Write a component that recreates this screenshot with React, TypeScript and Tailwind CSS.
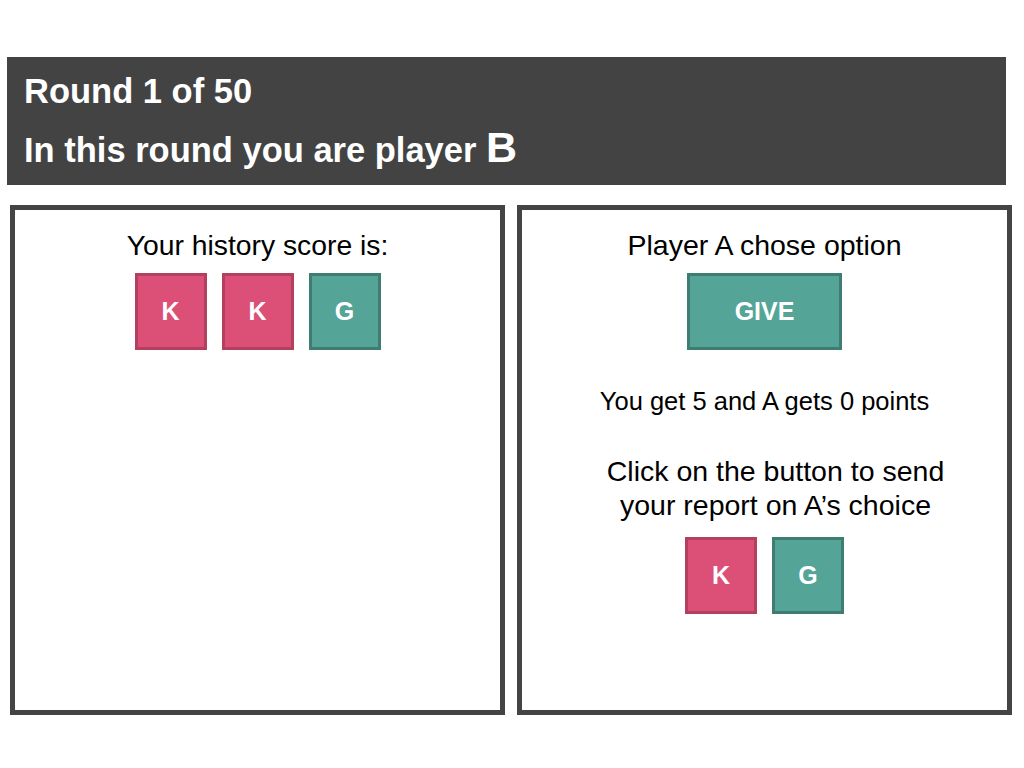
import React from "react"

interface TileProps {
    letter: string
    kind: 'keep' | 'give'
    wide?: boolean
}

function Tile(props: TileProps) {
    const colors = props.kind === 'keep'
        ? "bg-[#dc4f77] border-[#b3405f]"
        : "bg-[#54a597] border-[#3f7c71]"
    return (
        <div
            className={`${colors} ${props.wide ? "w-[155px]" : "w-[72px]"} h-[77px] border-[3px] flex items-center justify-center text-white font-bold text-[25px]`}
        >
            {props.letter}
        </div>
    )
}

export default function App() {
    return (
        <div className="w-[1024px] h-[768px] bg-white pt-[57px] text-black" style={{ fontFamily: '"Liberation Sans", Arial, sans-serif' }}>
            <div className="ml-[7px] w-[999px] h-[128px] bg-[#434343] text-white font-bold pl-[17px] pt-[16px]">
                <div className="text-[34.5px] leading-[36px]">Round 1 of 50</div>
                <div className="text-[34.5px] leading-[36px] mt-[20px]">
                    In this round you are player <span className="text-[43px] leading-[36px]">B</span>
                </div>
            </div>

            <div className="flex gap-[12px] ml-[10px] mt-[20px]">
                <div className="w-[495px] h-[510px] border-[5px] border-[#444444] flex flex-col items-center pt-[19px]">
                    <div className="text-[28.3px] leading-[32px]">Your history score is:</div>
                    <div className="flex gap-[15px] mt-[12px]">
                        <Tile letter="K" kind="keep" />
                        <Tile letter="K" kind="keep" />
                        <Tile letter="G" kind="give" />
                    </div>
                </div>

                <div className="w-[495px] h-[510px] border-[5px] border-[#444444] flex flex-col items-center pt-[19px]">
                    <div className="text-[28.5px] leading-[32px]">Player A chose option</div>
                    <div className="mt-[12px]">
                        <Tile letter="GIVE" kind="give" wide />
                    </div>
                    <div className="text-[25.5px] leading-[30px] mt-[36px]">You get 5 and A gets 0 points</div>
                    <div className="text-[28.5px] leading-[34px] mt-[38px] text-center pl-[22px]">
                        Click on the button to send<br />your report on A’s choice
                    </div>
                    <div className="flex gap-[15px] mt-[15px]">
                        <Tile letter="K" kind="keep" />
                        <Tile letter="G" kind="give" />
                    </div>
                </div>
            </div>
        </div>
    )
}
